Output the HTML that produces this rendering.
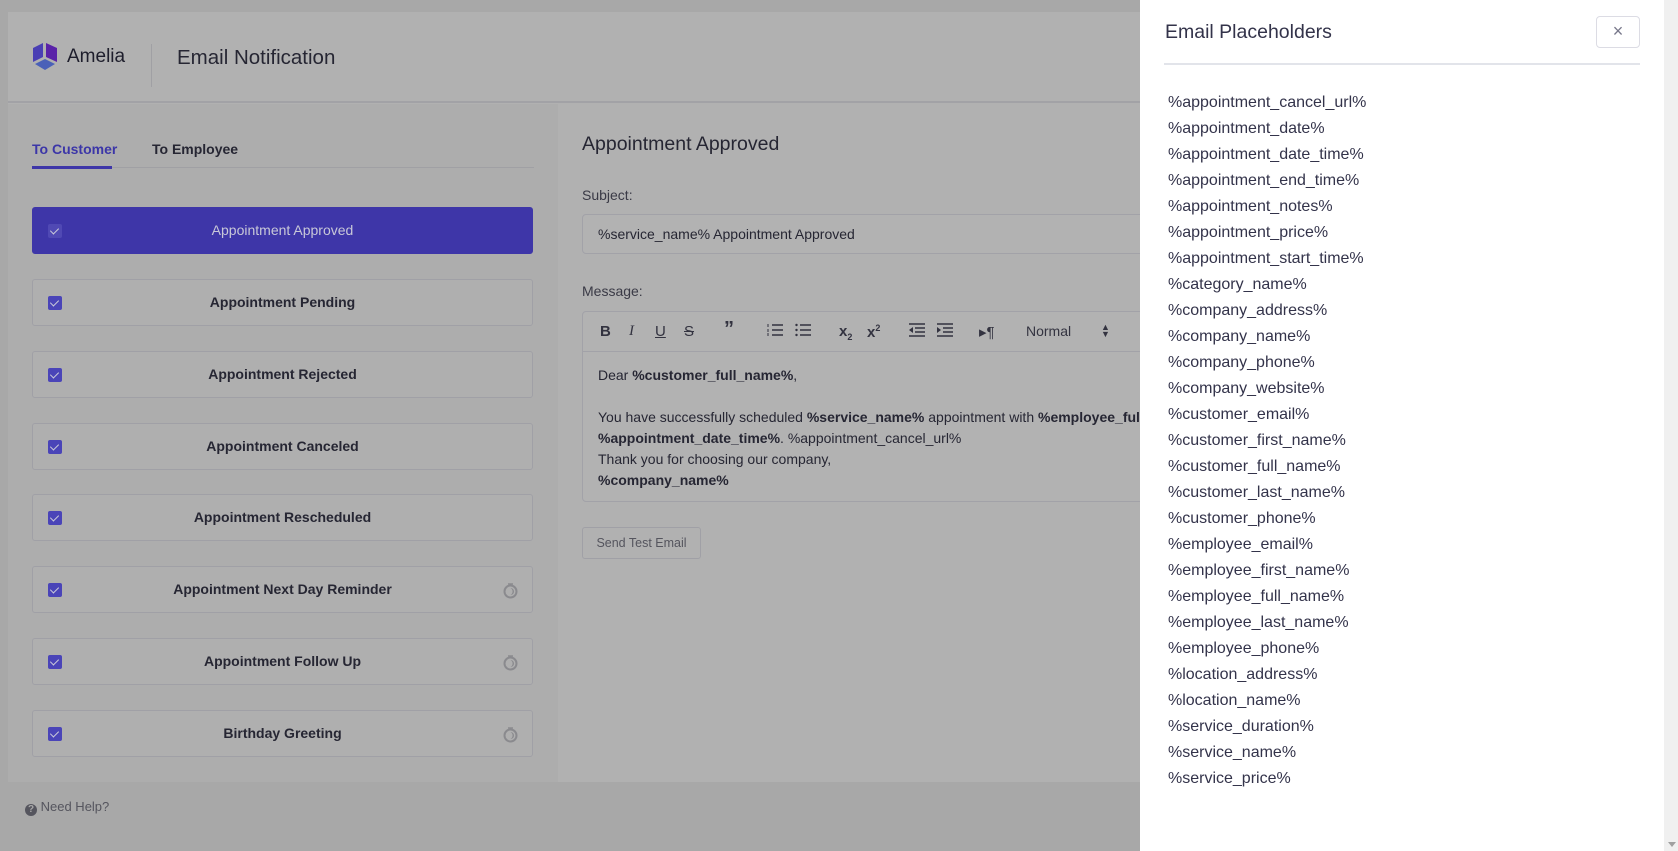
<!DOCTYPE html>
<html><head><meta charset="utf-8"><style>
*{margin:0;padding:0;box-sizing:border-box}
body{width:1678px;height:851px;overflow:hidden;background:#a8a8a8;font-family:"Liberation Sans",sans-serif;position:relative;color:#262633}
.a{position:absolute;white-space:nowrap}
.card{position:absolute;left:8px;top:12px;width:1132px;height:770px;background:#b1b1b1}
.header{position:absolute;left:8px;top:12px;width:1132px;height:91px;background:#b1b1b1;border-bottom:2px solid #a2a2a6}
.leftp{position:absolute;left:8px;top:104px;width:550px;height:678px;background:#adadad}
.item{position:absolute;left:32px;width:501px;height:47px;border:1px solid #a0a0a6;border-radius:3px;background:#afafaf;font-weight:bold;font-size:14px;text-align:center;line-height:45px;padding-top:0;color:#262633}
.item .cb{position:absolute;left:15px;top:16px;width:14px;height:14px;background:#4a44b8;border-radius:2px}
.item .cb:after{content:"";position:absolute;left:4px;top:2px;width:4px;height:7px;border:solid #c9c9d8;border-width:0 1.3px 1.3px 0;transform:rotate(45deg)}
.item.sel{background:#3e36a8;border-color:#3e36a8;color:#c8c8d8;font-weight:normal}
.item.sel .cb{background:#5049b4}
.item svg{position:absolute;right:14px;top:15px}
.tb{position:absolute;top:323px;font-size:15px;color:#333340}
.ph{position:absolute;left:1168px;font-size:16px;color:#33334a}
</style></head><body>
<div class="card"></div>
<div class="header"></div>
<div class="leftp"></div>
<svg class="a" style="left:32px;top:43px" width="26" height="28" viewBox="0 0 26 28"><path d="M1 5 L11 0 L11 14 L1 19Z" fill="#4a3fb4"/><path d="M14 0 L25 5 L25 19 L14 14Z" fill="#5a22a8"/><path d="M13 16 L23 21 L13 27 L3 21Z" fill="#4a60b8"/></svg>
<div class="a" style="left:67px;top:46px;font-size:19px;color:#1e1e2c">Amelia</div>
<div class="a" style="left:151px;top:44px;width:1px;height:43px;background:#a0a0a4"></div>
<div class="a" style="left:177px;top:46px;font-size:20.5px;color:#262633">Email Notification</div>
<div class="a" style="left:32px;top:141px;font-size:14px;color:#3c36a8;font-weight:bold">To Customer</div>
<div class="a" style="left:152px;top:141px;font-size:14px;color:#262633;font-weight:bold">To Employee</div>
<div class="a" style="left:32px;top:167px;width:502px;height:1px;background:#a0a0a4"></div>
<div class="a" style="left:32px;top:166px;width:80px;height:3px;background:#3e36a8"></div>
<div class="item sel" style="top:207px"><span class="cb"></span>Appointment Approved</div>
<div class="item" style="top:279px"><span class="cb"></span>Appointment Pending</div>
<div class="item" style="top:351px"><span class="cb"></span>Appointment Rejected</div>
<div class="item" style="top:423px"><span class="cb"></span>Appointment Canceled</div>
<div class="item" style="top:494px"><span class="cb"></span>Appointment Rescheduled</div>
<div class="item" style="top:566px"><span class="cb"></span>Appointment Next Day Reminder<svg width="16" height="17" viewBox="0 0 16 17"><circle cx="8.5" cy="9.5" r="6" fill="none" stroke="#8a8a8e" stroke-width="2"/><path d="M6 2h5" stroke="#8a8a8e" stroke-width="1.5"/><path d="M8.5 6 A3.5 3.5 0 0 1 8.5 13 A4 4 0 0 0 8.5 6Z" fill="#8a8a8e"/></svg></div>
<div class="item" style="top:638px"><span class="cb"></span>Appointment Follow Up<svg width="16" height="17" viewBox="0 0 16 17"><circle cx="8.5" cy="9.5" r="6" fill="none" stroke="#8a8a8e" stroke-width="2"/><path d="M6 2h5" stroke="#8a8a8e" stroke-width="1.5"/><path d="M8.5 6 A3.5 3.5 0 0 1 8.5 13 A4 4 0 0 0 8.5 6Z" fill="#8a8a8e"/></svg></div>
<div class="item" style="top:710px"><span class="cb"></span>Birthday Greeting<svg width="16" height="17" viewBox="0 0 16 17"><circle cx="8.5" cy="9.5" r="6" fill="none" stroke="#8a8a8e" stroke-width="2"/><path d="M6 2h5" stroke="#8a8a8e" stroke-width="1.5"/><path d="M8.5 6 A3.5 3.5 0 0 1 8.5 13 A4 4 0 0 0 8.5 6Z" fill="#8a8a8e"/></svg></div>
<div class="a" style="left:25px;top:799px;font-size:13px;color:#55555e"><span style="display:inline-block;width:12px;height:12px;border-radius:50%;background:#55555e;color:#a8a8a8;font-size:10px;text-align:center;line-height:12px;font-weight:bold;vertical-align:-1px">?</span> Need Help?</div>

<div class="a" style="left:582px;top:133px;font-size:19.5px;color:#262633">Appointment Approved</div>
<div class="a" style="left:582px;top:187px;font-size:14px;color:#3a3a46">Subject:</div>
<div class="a" style="left:582px;top:214px;width:600px;height:40px;border:1px solid #a2a2a8;border-radius:4px;background:#b2b2b2"></div>
<div class="a" style="left:598px;top:226px;font-size:14px;color:#262633">%service_name% Appointment Approved</div>
<div class="a" style="left:582px;top:283px;font-size:14px;color:#3a3a46">Message:</div>
<div class="a" style="left:582px;top:311px;width:600px;height:191px;border:1px solid #a2a2a8;border-radius:4px;background:#b2b2b2"></div>
<div class="a" style="left:582px;top:351px;width:600px;height:1px;background:#a2a2a8"></div>
<div class="tb" style="left:600px;font-weight:bold">B</div>
<div class="tb" style="left:629px;font-style:italic;font-family:'Liberation Serif',serif">I</div>
<div class="tb" style="left:655px;text-decoration:underline">U</div>
<div class="tb" style="left:684px;text-decoration:line-through">S</div>
<div class="tb" style="left:724px;font-weight:bold;font-size:20px;top:318px">”</div>
<svg class="a" style="left:767px;top:323px" width="16" height="14"><path d="M5 2h11M5 7h11M5 12h11" stroke="#333340" stroke-width="1.6"/><path d="M1 1v3M1 6v3M1 10v3" stroke="#333340" stroke-width="1"/></svg>
<svg class="a" style="left:795px;top:323px" width="16" height="14"><path d="M5 2h11M5 7h11M5 12h11" stroke="#333340" stroke-width="1.6"/><circle cx="1.5" cy="2" r="1.2" fill="#333340"/><circle cx="1.5" cy="7" r="1.2" fill="#333340"/><circle cx="1.5" cy="12" r="1.2" fill="#333340"/></svg>
<div class="tb" style="left:839px;font-weight:bold">x<sub style="font-size:9px">2</sub></div>
<div class="tb" style="left:867px;font-weight:bold">x<sup style="font-size:9px">2</sup></div>
<svg class="a" style="left:909px;top:323px" width="16" height="14"><path d="M0 1h16M6 5h10M6 9h10M0 13h16" stroke="#333340" stroke-width="1.6"/><path d="M4 4v6L0 7z" fill="#333340"/></svg>
<svg class="a" style="left:937px;top:323px" width="16" height="14"><path d="M0 1h16M6 5h10M6 9h10M0 13h16" stroke="#333340" stroke-width="1.6"/><path d="M0 4v6L4 7z" fill="#333340"/></svg>
<div class="tb" style="left:979px">▸¶</div>
<div class="tb" style="left:1026px;font-size:14px">Normal</div>
<div class="tb" style="left:1101px;font-size:9px;line-height:7px;top:324px">▲<br>▼</div>
<div class="a" style="left:598px;top:365px;font-size:14px;line-height:21px;color:#262633">Dear <b>%customer_full_name%</b>,<br><br>You have successfully scheduled <b>%service_name%</b> appointment with <b>%employee_full_name%</b><br><b>%appointment_date_time%</b>. %appointment_cancel_url%<br>Thank you for choosing our company,<br><b>%company_name%</b></div>
<div class="a" style="left:582px;top:527px;width:119px;height:32px;border:1px solid #a0a0a6;border-radius:3px;font-size:12.5px;color:#55555e;text-align:center;line-height:30px">Send Test Email</div>

<div class="a" style="left:1140px;top:0;width:524px;height:851px;background:#fff"></div>
<div class="a" style="left:1664px;top:0;width:14px;height:851px;background:#f0f0f0"></div>
<div class="a" style="left:1668px;top:842px;width:0;height:0;border-left:4px solid transparent;border-right:4px solid transparent;border-top:5px solid #a0a0a0"></div>
<div class="a" style="left:1165px;top:21px;font-size:19.5px;color:#33334a">Email Placeholders</div>
<div class="a" style="left:1596px;top:16px;width:44px;height:32px;border:1px solid #dcdce4;border-radius:4px;text-align:center;line-height:29px;font-size:18px;color:#77778a">×</div>
<div class="a" style="left:1164px;top:63px;width:476px;height:2px;background:#e2e4ea"></div>
<div class="ph" style="top:94px">%appointment_cancel_url%</div>
<div class="ph" style="top:120px">%appointment_date%</div>
<div class="ph" style="top:146px">%appointment_date_time%</div>
<div class="ph" style="top:172px">%appointment_end_time%</div>
<div class="ph" style="top:198px">%appointment_notes%</div>
<div class="ph" style="top:224px">%appointment_price%</div>
<div class="ph" style="top:250px">%appointment_start_time%</div>
<div class="ph" style="top:276px">%category_name%</div>
<div class="ph" style="top:302px">%company_address%</div>
<div class="ph" style="top:328px">%company_name%</div>
<div class="ph" style="top:354px">%company_phone%</div>
<div class="ph" style="top:380px">%company_website%</div>
<div class="ph" style="top:406px">%customer_email%</div>
<div class="ph" style="top:432px">%customer_first_name%</div>
<div class="ph" style="top:458px">%customer_full_name%</div>
<div class="ph" style="top:484px">%customer_last_name%</div>
<div class="ph" style="top:510px">%customer_phone%</div>
<div class="ph" style="top:536px">%employee_email%</div>
<div class="ph" style="top:562px">%employee_first_name%</div>
<div class="ph" style="top:588px">%employee_full_name%</div>
<div class="ph" style="top:614px">%employee_last_name%</div>
<div class="ph" style="top:640px">%employee_phone%</div>
<div class="ph" style="top:666px">%location_address%</div>
<div class="ph" style="top:692px">%location_name%</div>
<div class="ph" style="top:718px">%service_duration%</div>
<div class="ph" style="top:744px">%service_name%</div>
<div class="ph" style="top:770px">%service_price%</div>
</body></html>
